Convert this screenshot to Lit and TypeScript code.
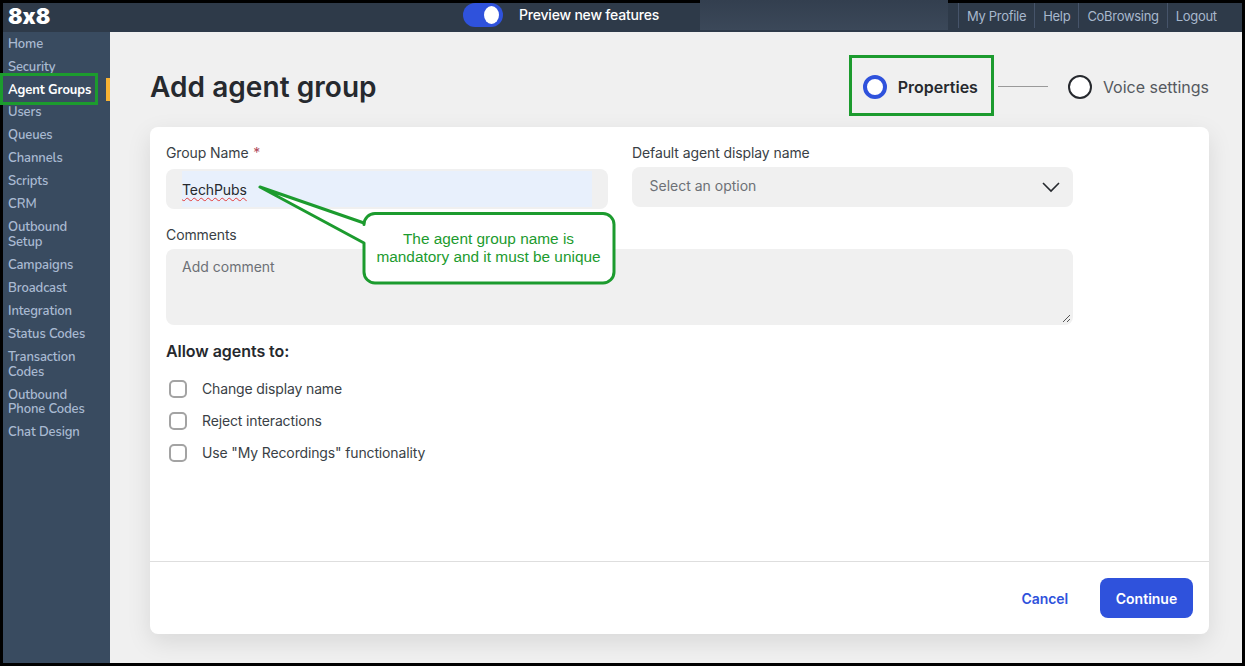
import { LitElement, html, css } from "lit";
import { customElement } from "lit/decorators.js";

const NAV = [
  "Home", "Security", "Agent Groups", "Users", "Queues", "Channels", "Scripts", "CRM",
  "Outbound Setup", "Campaigns", "Broadcast", "Integration", "Status Codes",
  "Transaction Codes", "Outbound Phone Codes", "Chat Design",
];
const LINKS = ["My Profile", "Help", "CoBrowsing", "Logout"];
const CHECKS = ["Change display name", "Reject interactions", 'Use "My Recordings" functionality'];

@customElement("app-root")
export class AppRoot extends LitElement {
  static styles = css`
    :host { display: block; width: 1245px; height: 666px; position: relative; overflow: hidden;
      font-family: "Inter", "Liberation Sans", sans-serif; color: #26292e; }
    .frame { width: 100%; height: 100%; box-sizing: border-box; border: 3px solid #000; display: flex; flex-direction: column; background: #f0f0f0; }
    .top { height: 29px; flex: none; background: #2e3a49; display: flex; align-items: center; position: relative; }
    .logo { position: absolute; left: 5px; top: 0; font: 900 21.5px/26px "Inter", sans-serif; font-feature-settings: "calt" 0; color: #fff; }
    .toggle { margin-left: 460px; width: 40px; height: 24px; margin-top: -5px; border-radius: 12px; background: #2f52dc; display: flex; align-items: center; justify-content: flex-end; padding-right: 4px; box-sizing: border-box; flex: none; }
    .knob { width: 15px; height: 18px; border-radius: 50%; background: #fff; }
    .pv { margin-left: 16px; margin-top: -7px; width: 181px; flex: none; color: #fff; font-size: 14px; font-weight: 500; letter-spacing: -0.2px; white-space: nowrap; }
    .patch { width: 248px; height: 30px; align-self: flex-start; flex: none; background: linear-gradient(#333f4f, #3b4859); position: relative; top: -3px; }
    .links { display: flex; margin-left: 10px; height: 25px; align-self: center; margin-top: -4px; }
    .links span { display: flex; align-items: center; padding: 0 8px; border-left: 1px solid #46546a; color: #a8b8cd; font-size: 13px; letter-spacing: -0.3px; white-space: nowrap; }
    .body { flex: 1; display: flex; min-height: 0; }
    .side { width: 107px; flex: none; background: #394b60; position: relative; padding-top: 0.4px; box-sizing: border-box; }
    .item { padding: 4.15px 18px 4.15px 5px; font: 600 13px/14.7px "Nunito", "Open Sans", "Noto Sans", sans-serif; color: #a9bad2; letter-spacing: -0.1px; }
    .item.active { color: #fff; font-weight: 700; padding-right: 0; white-space: nowrap; }
    .flag { position: absolute; right: 0; top: 46px; width: 4px; height: 23px; background: #f7b233; }
    .main { flex: 1; min-width: 0; display: flex; flex-direction: column; padding: 0 33px 29px 40px; }
    .head { height: 95px; flex: none; box-sizing: border-box; padding-top: 14px; display: flex; align-items: center; justify-content: space-between; }
    h1 { margin: 0; font-size: 28px; font-weight: 600; letter-spacing: 0.05px; color: #26292e; }
    .steps { display: flex; align-items: center; }
    .dot { width: 24px; height: 24px; box-sizing: border-box; border-radius: 50%; border: 2px solid #26292e; background: #fff; flex: none; }
    .dot.on { border: 4px solid #2f52dc; }
    .sl { margin-left: 11px; font-size: 16px; color: #55595f; white-space: nowrap; }
    .sl.on { font-weight: 600; color: #26292e; }
    .rule { width: 50px; height: 1px; background: #9a9a9a; margin: 0 20px 0 20px; }
    .card { flex: 1; background: #fff; border-radius: 8px; box-shadow: 0 8px 24px rgba(0,0,0,.1); display: flex; flex-direction: column; min-height: 0; }
    .form { flex: 1; padding: 17px 16px 0; }
    .wrap { width: 907px; }
    .grid { display: grid; grid-template-columns: 442px 441px; column-gap: 24px; }
    label { display: block; font-size: 14px; line-height: 18px; color: #3a3f46; letter-spacing: -0.1px; }
    .req { color: #b04a5a; margin-left: 1px; }
    .group { margin-top: 7px; height: 40px; border-radius: 8px; background: #f0f0f0; padding: 2px 16px; box-sizing: border-box; }
    .fill { height: 36px; background: #e8f0fc; display: flex; align-items: center; font-size: 14px; letter-spacing: -0.1px; color: #26292e; }
    .fill span { text-decoration: underline wavy #e23a3a 1px; text-underline-offset: 2px; }
    .select { margin-top: 5px; height: 40px; box-sizing: border-box; padding: 0 12px 3px 17.5px; border-radius: 8px; background: #f0f0f0; display: flex; align-items: center; justify-content: space-between; font-size: 14px; color: #6d7076; }
    .select svg { margin-top: 3px; }
    .c-label { margin-top: 17px; }
    .ta { margin-top: 5px; height: 76px; border-radius: 8px; background: #f0f0f0; padding: 9px 16px; box-sizing: border-box; font-size: 14px; line-height: 18px; color: #6d7076; position: relative; }
    .grip { position: absolute; right: 2px; bottom: 2px; }
    h2 { margin: 16px 0 12px; font-size: 16px; line-height: 20px; font-weight: 600; letter-spacing: -0.05px; color: #26292e; }
    .chk { height: 32px; display: flex; align-items: center; gap: 15px; padding-left: 3px; font-size: 14px; letter-spacing: -0.14px; color: #3a3f46; }
    .chk span { position: relative; top: -1px; }
    .box { width: 18px; height: 18px; box-sizing: border-box; border: 2px solid #a3a3a3; border-radius: 5px; background: #fff; flex: none; }
    .foot { height: 73px; flex: none; box-sizing: border-box; border-top: 1px solid #dedede; display: flex; justify-content: flex-end; align-items: flex-start; gap: 32px; padding: 16px 16px 0; }
    .cancel { height: 40px; display: flex; align-items: center; font-size: 14px; font-weight: 600; letter-spacing: -0.1px; color: #2f52dc; }
    .go { width: 93px; height: 40px; border-radius: 8px; background: #2f52dc; color: #fff; font-size: 14px; font-weight: 600; display: flex; align-items: center; justify-content: center; }
    .mark { position: absolute; box-sizing: border-box; border: 3px solid #1c9b2e; pointer-events: none; }
    .m1 { left: 0; top: 73px; width: 98px; height: 32px; }
    .m2 { left: 849px; top: 55px; width: 145px; height: 61px; }
    .callout { position: absolute; left: 255px; top: 180px; width: 362px; height: 107px; }
    .callout svg { display: block; }
    .ctext { position: absolute; left: 108px; top: 32px; width: 251px; height: 72px; display: flex; align-items: center; justify-content: center; text-align: center; font: 15.4px/18px "Liberation Sans", Arial, sans-serif; color: #1c9b2e; }
  `;

  render() {
    return html`
      <div class="frame">
        <div class="top">
          <div class="logo">8x8</div>
          <div class="toggle"><div class="knob"></div></div>
          <div class="pv">Preview new features</div>
          <div class="patch"></div>
          <div class="links">${LINKS.map((l) => html`<span>${l}</span>`)}</div>
        </div>
        <div class="body">
          <nav class="side">
            ${NAV.map((n) => html`<div class="item ${n === "Agent Groups" ? "active" : ""}">${n}</div>`)}
            <div class="flag"></div>
          </nav>
          <main class="main">
            <div class="head">
              <h1>Add agent group</h1>
              <div class="steps">
                <div class="dot on"></div><div class="sl on">Properties</div>
                <div class="rule"></div>
                <div class="dot"></div><div class="sl">Voice settings</div>
              </div>
            </div>
            <section class="card">
              <div class="form">
                <div class="wrap">
                  <div class="grid">
                    <div>
                      <label>Group Name <span class="req">*</span></label>
                      <div class="group"><div class="fill"><span>TechPubs</span></div></div>
                    </div>
                    <div>
                      <label>Default agent display name</label>
                      <div class="select">Select an option
                        <svg width="20" height="12" viewBox="0 0 20 12" fill="none" stroke="#26292e" stroke-width="1.6"><path d="M2 2l8 8 8-8"/></svg>
                      </div>
                    </div>
                  </div>
                  <label class="c-label">Comments</label>
                  <div class="ta">Add comment
                    <svg class="grip" width="9" height="9" viewBox="0 0 9 9" stroke="#555" stroke-width="1"><path d="M1 8l7-7M5 8l3-3"/></svg>
                  </div>
                  <h2>Allow agents to:</h2>
                  ${CHECKS.map((c) => html`<div class="chk"><div class="box"></div><span>${c}</span></div>`)}
                </div>
              </div>
              <div class="foot">
                <div class="cancel">Cancel</div>
                <div class="go">Continue</div>
              </div>
            </section>
          </main>
        </div>
      </div>
      <div class="mark m1"></div>
      <div class="mark m2"></div>
      <div class="callout">
        <svg width="362" height="107" viewBox="0 0 362 107">
          <path d="M120 33.5H348a11 11 0 0 1 11 11V92a11 11 0 0 1-11 11H120a11 11 0 0 1-11-11V63L5 7 109 43V44.5a11 11 0 0 1 11-11Z" fill="#fff" stroke="#1c9b2e" stroke-width="3" stroke-linejoin="round"/>
        </svg>
        <div class="ctext">The agent group name is<br />mandatory and it must be unique</div>
      </div>
    `;
  }
}
